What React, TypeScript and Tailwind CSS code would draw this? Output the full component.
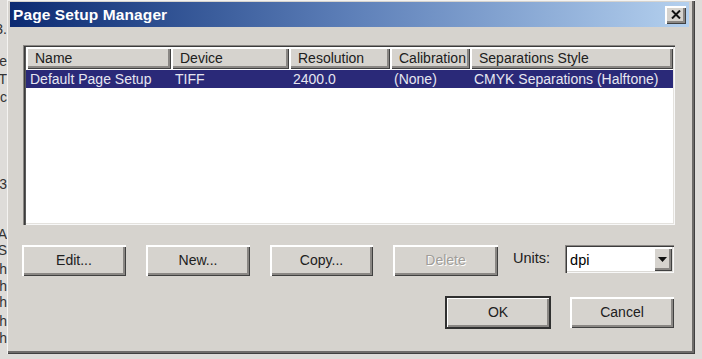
import React from "react";

const raised =
  "bg-[#d6d3ce] shadow-[inset_2px_2px_0_#ffffff,inset_-1px_-1px_0_#404040,inset_-3px_-3px_0_#8a8784]";

const Button = ({
  label,
  w = "w-[104px]",
  disabled = false,
  isDefault = false,
}: {
  label: string;
  w?: string;
  disabled?: boolean;
  isDefault?: boolean;
}) => (
  <div
    className={`${w} h-[31px] flex items-center justify-center text-[14px] ${raised} ${
      isDefault ? "outline outline-2 outline-[#303030] -outline-offset-1" : ""
    }`}
  >
    <span
      className={
        disabled ? "text-[#a09d99] [text-shadow:1px_1px_0_#ffffff]" : "text-[#202020]"
      }
    >
      {label}
    </span>
  </div>
);

const columns = [
  { name: "Name", w: "w-[145px]" },
  { name: "Device", w: "w-[118px]" },
  { name: "Resolution", w: "w-[101px]" },
  { name: "Calibration", w: "w-[80px]" },
  { name: "Separations Style", w: "w-[203px]" },
];

const row = ["Default Page Setup", "TIFF", "2400.0", "(None)", "CMYK Separations (Halftone)"];

const stripLines = [
  { t: "3.", mt: "mt-[22px]" },
  { t: "e", mt: "mt-[16px]" },
  { t: "T", mt: "mt-[2px]" },
  { t: "c", mt: "mt-[2px]" },
  { t: "3", mt: "mt-[71px]" },
  { t: "A", mt: "mt-[34px]" },
  { t: "S", mt: "mt-[0px]" },
  { t: "th", mt: "mt-[3px]" },
  { t: "th", mt: "mt-[1px]" },
  { t: "th", mt: "mt-[0px]" },
  { t: "th", mt: "mt-[3px]" },
  { t: "th", mt: "mt-[1px]" },
];

export default function App() {
  return (
    <div className="w-[702px] h-[359px] bg-[#dedcd9] flex overflow-hidden font-['Liberation_Sans',Arial,sans-serif]">
      {/* page behind the dialog */}
      <div className="w-[7px] shrink-0 overflow-hidden flex flex-col items-end text-[14px] leading-[14px] text-[#333]">
        {stripLines.map((l, i) => (
          <div key={i} className={`${l.mt} h-[16px] whitespace-nowrap`}>
            {l.t}
          </div>
        ))}
      </div>

      {/* dialog */}
      <div className="w-[688px] h-[354px] bg-[#d6d3ce] flex flex-col p-[3px] shadow-[inset_1px_1px_0_#f4f3f1,inset_-1px_-1px_0_#404040,inset_-3px_-3px_0_#6e6c6a]">
        {/* title bar */}
        <div className="h-[25px] mt-[-1px] mr-[3px] flex items-center justify-between pl-[3px] pr-[3px] bg-gradient-to-r from-[#0c2a72] via-[#5d7fb8] to-[#b4d0ee]">
          <span className="text-white font-bold text-[15.5px] tracking-[0.1px]">Page Setup Manager</span>
          <div className={`w-[21px] h-[18px] flex items-center justify-center ${raised}`}>
            <svg width="10" height="9" viewBox="0 0 10 9">
              <path d="M1 0.5 L9 8.5 M9 0.5 L1 8.5" stroke="#101010" strokeWidth="2" />
            </svg>
          </div>
        </div>

        {/* body */}
        <div className="flex flex-col pl-[13px] pr-[10px] pt-[18px]">
          {/* list */}
          <div className="w-[652px] h-[180px] bg-white flex flex-col p-[2px] shadow-[inset_1px_1px_0_#8a8784,inset_2px_2px_0_#3c3c3c,inset_3px_0_0_#5a5a5a,inset_-1px_-1px_0_#f8f8f8,inset_-2px_-2px_0_#e4e2de]">
            <div className="flex h-[22px] ml-[1px]">
              {columns.map((c) => (
                <div
                  key={c.name}
                  className={`${c.w} shrink-0 h-full flex items-center pl-[9px] text-[14px] text-[#202020] ${raised}`}
                >
                  {c.name}
                </div>
              ))}
            </div>
            <div className="flex h-[18px] mt-[1px] ml-[1px] w-[647px] bg-[#2a2978] text-[#e6e6f0] text-[14px] items-center">
              {row.map((v, i) => (
                <div key={i} className={`${columns[i].w} shrink-0 pl-[4px] whitespace-nowrap`}>
                  {v}
                </div>
              ))}
            </div>
          </div>

          {/* button row */}
          <div className="flex items-start mt-[20px] ml-[-1px]">
            <div className="flex gap-[20px]">
              <Button label="Edit..." />
              <Button label="New..." />
              <Button label="Copy..." w="w-[103px]" />
              <Button label="Delete" w="w-[105px]" disabled />
            </div>
            <span className="ml-[15px] mt-[3px] text-[14.5px] text-[#202020]">Units:</span>
            <div className="ml-[15px] w-[109px] h-[28px] bg-white flex items-stretch p-[2px] shadow-[inset_1px_1px_0_#8a8784,inset_2px_2px_0_#3c3c3c,inset_-1px_-1px_0_#f8f8f8,inset_-2px_-2px_0_#dcdad6]">
              <span className="flex-1 pl-[3px] pt-[3px] text-[14.5px] text-black">dpi</span>
              <div className={`w-[19px] flex items-center justify-center ${raised}`}>
                <svg width="9" height="5" viewBox="0 0 9 5">
                  <path d="M0 0 H9 L4.5 5 Z" fill="#101010" />
                </svg>
              </div>
            </div>
          </div>

          {/* ok / cancel */}
          <div className="flex justify-end gap-[20px] mt-[21px] mr-[8px]">
            <Button label="OK" isDefault />
            <Button label="Cancel" />
          </div>
        </div>
      </div>
    </div>
  );
}
